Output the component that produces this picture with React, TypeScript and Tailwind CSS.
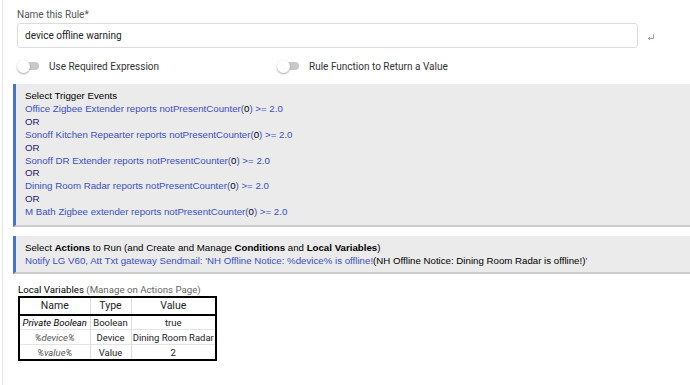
import React from 'react';

const triggers = [
  'Office Zigbee Extender',
  'Sonoff Kitchen Repearter',
  'Sonoff DR Extender',
  'Dining Room Radar',
  'M Bath Zigbee extender',
];

const vars = [
  { name: 'Private Boolean', type: 'Boolean', value: 'true', dim: false },
  { name: '%device%', type: 'Device', value: 'Dining Room Radar', dim: true },
  { name: '%value%', type: 'Value', value: '2', dim: true },
];

function Toggle({ label }: { label: string }) {
  return (
    <div className="flex items-center h-[14px]">
      <div className="relative w-[22px] h-[13px] flex items-center">
        <div className="absolute left-[3px] w-[19px] h-[8px] rounded-full bg-[#c9c9c9]" />
        <div className="absolute left-0 w-[13px] h-[13px] rounded-full bg-white shadow-[0_1px_2px_rgba(0,0,0,0.35)]" />
      </div>
      <span className="ml-[10px] text-[10px] text-[#333]">{label}</span>
    </div>
  );
}

export default function App() {
  return (
    <div className="w-[690px] h-[385px] overflow-hidden bg-white pl-[2px] font-['Roboto',sans-serif]">
      <div className="h-full border-l border-[#e6e6e6] pt-[8px]">
        <div className="ml-[14px] text-[10px] leading-[14px] text-[#555]">Name this Rule*</div>
        <div className="flex items-center mt-[1px]">
          <div className="ml-[14px] w-[621px] h-[25px] border border-[#dcdcdc] rounded-[3px] flex items-center pl-[7px] text-[10px] text-[#222]">
            device offline warning
          </div>
          <svg className="ml-[9px] mt-[3px]" width="8" height="7" viewBox="0 0 8 7" fill="none" stroke="#9a9a9a" strokeWidth="1">
            <path d="M6.5 0.5V4.5H1.5" />
            <path d="M3 3L1.2 4.5L3 6" />
          </svg>
        </div>
        <div className="flex items-center mt-[11px] ml-[14px]">
          <div className="w-[260px]">
            <Toggle label="Use Required Expression" />
          </div>
          <Toggle label="Rule Function to Return a Value" />
        </div>

        <div className="ml-[10px] mt-[11px] bg-[#ebebeb] border-l-[3px] border-[#4b73c6] border-b-2 border-b-[#cdcdcd] pl-[9px] pt-[6px] pb-[6px] font-['Liberation_Sans',Arial,sans-serif] text-[9.7px] leading-[12.9px]">
          <div className="text-black">Select Trigger Events</div>
          {triggers.map((t, i) => (
            <React.Fragment key={t}>
              {i > 0 && <div className="text-[#1a1a66]">OR</div>}
              <div className="text-[#3a4fc2]">
                {t} reports notPresentCounter(<span className="text-black">0</span>) &gt;= 2.0
              </div>
            </React.Fragment>
          ))}
        </div>

        <div className="ml-[10px] mt-[9px] bg-[#ebebeb] border-l-[3px] border-[#4b73c6] border-b-2 border-b-[#cdcdcd] pl-[9px] pt-[5px] pb-[5px] font-['Liberation_Sans',Arial,sans-serif] text-[9.7px] leading-[13px]">
          <div className="text-black">
            Select <b>Actions</b> to Run (and Create and Manage <b>Conditions</b> and <b>Local Variables</b>)
          </div>
          <div className="text-[#3a4fc2]">
            Notify LG V60, Att Txt gateway Sendmail: 'NH Offline Notice: %device% is offline!
            <span className="text-black">(NH Offline Notice: Dining Room Radar is offline!)</span>'
          </div>
        </div>

        <div className="ml-[15px] mt-[10px] text-[9.7px] leading-[12px] text-[#666]">
          <span className="text-black">Local Variables</span> (Manage on Actions Page)
        </div>
        <table className="ml-[15px] table-fixed w-[199px] border-2 border-black border-collapse text-[9.5px] text-[#222]">
          <thead>
            <tr className="border-b-2 border-black h-[16px]">
              <th className="font-normal text-[10.5px] w-[71px] border-r border-[#ddd] leading-[14px]">Name</th>
              <th className="font-normal text-[10.5px] w-[41px] border-r border-[#ddd]">Type</th>
              <th className="font-normal text-[10.5px]">Value</th>
            </tr>
          </thead>
          <tbody>
            {vars.map((v) => (
              <tr key={v.name} className="border-b border-[#e4e4e4] h-[15px] leading-[13px]">
                <td className={`text-center italic border-r border-[#ddd] whitespace-nowrap ${v.dim ? 'text-[#555]' : 'text-black'}`}>{v.name}</td>
                <td className="text-center border-r border-[#ddd]">{v.type}</td>
                <td className="text-center whitespace-nowrap">{v.value}</td>
              </tr>
            ))}
          </tbody>
        </table>
      </div>
    </div>
  );
}
